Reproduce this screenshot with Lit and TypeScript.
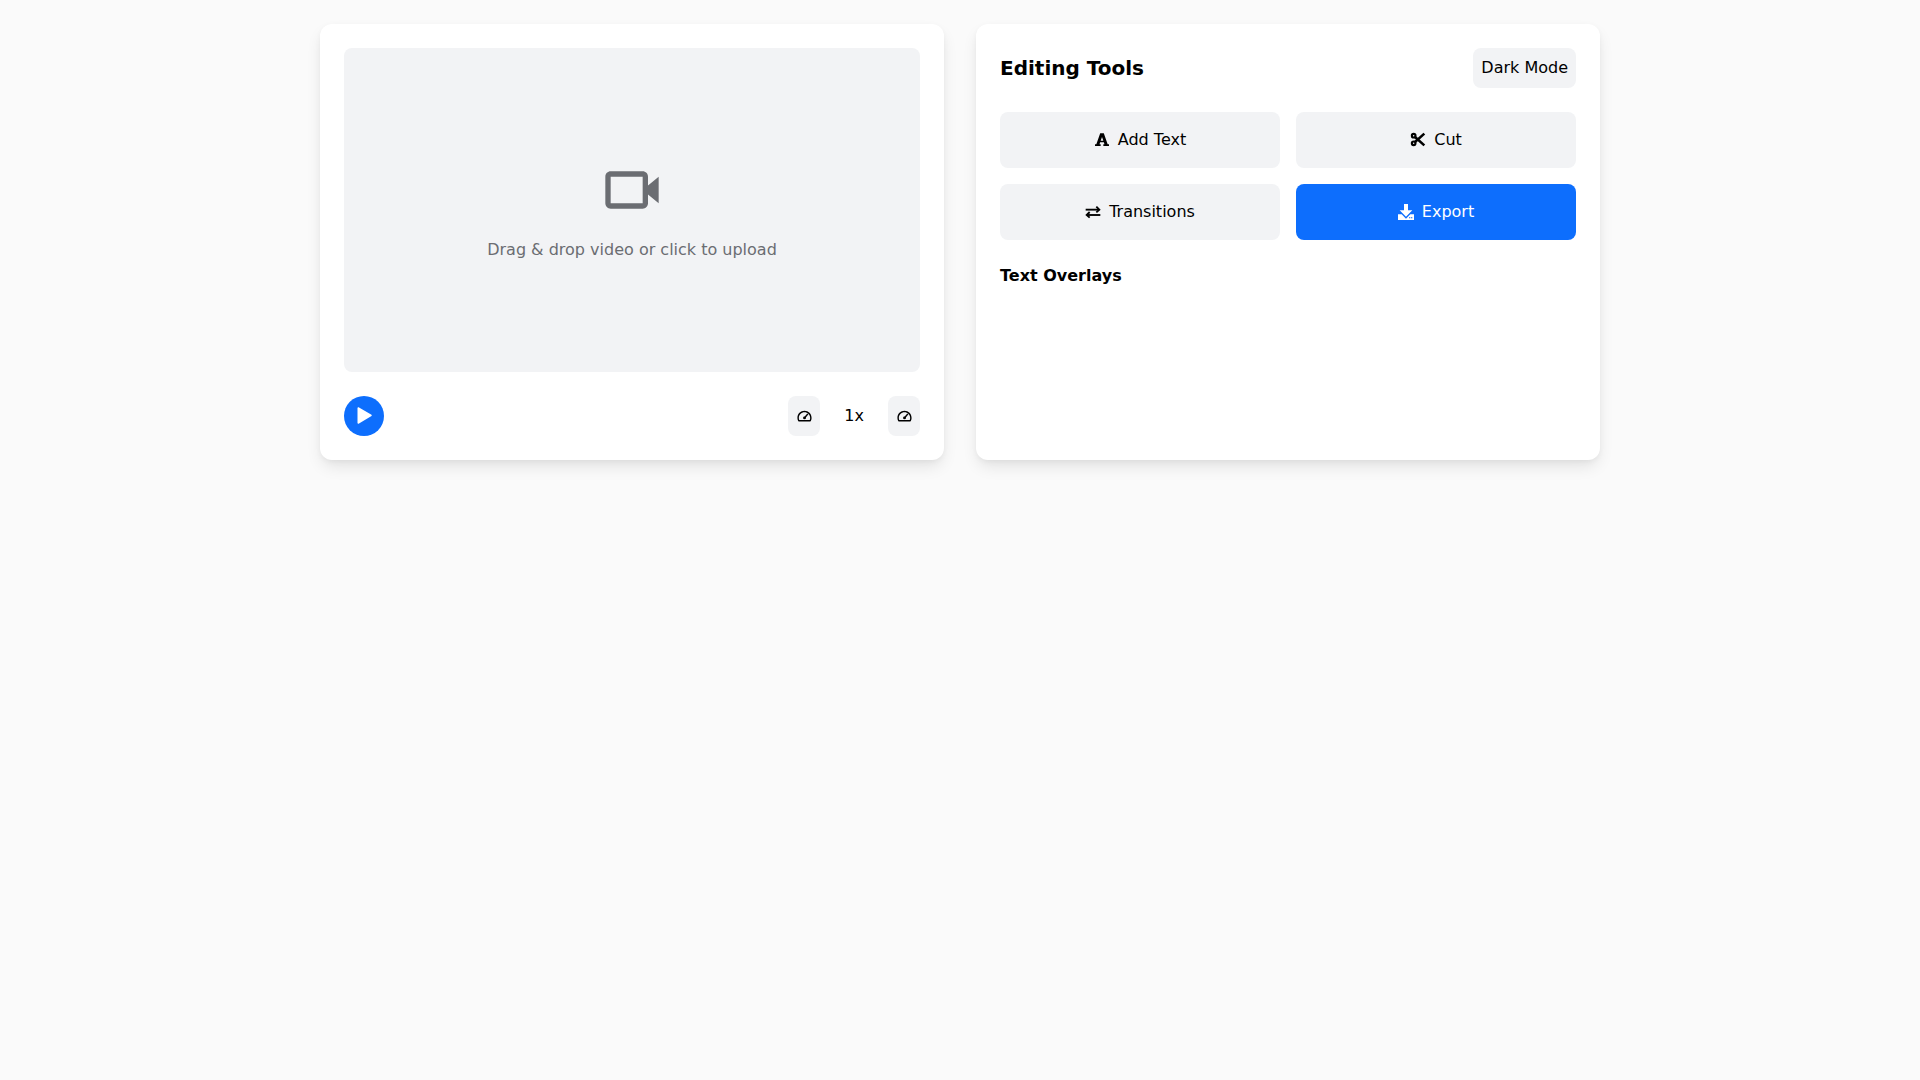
import { LitElement, html, css, svg } from "lit";
import { customElement } from "lit/decorators.js";

const gauge = svg`<path d="M12 4C6.486 4 2 8.486 2 14a9.89 9.89 0 0 0 1.051 4.445c.17.34.516.555.895.555h16.107c.379 0 .726-.215.896-.555A9.89 9.89 0 0 0 22 14c0-5.514-4.486-10-10-10zm7.41 13H4.59A7.875 7.875 0 0 1 4 14c0-4.411 3.589-8 8-8s8 3.589 8 8a7.875 7.875 0 0 1-.59 3z"/><circle cx="12" cy="14" r="2"/><path d="M12 14l4.700-5.700" stroke="currentColor" stroke-width="2.200" fill="none"/>`;
const video = svg`<path d="M18 7c0-1.103-.897-2-2-2H4c-1.103 0-2 .897-2 2v10c0 1.103.897 2 2 2h12c1.103 0 2-.897 2-2v-3.333L22 17V7l-4 3.333V7zm-1.998 10H4V7h12l.001 4.999L16 12l.001.001.001 4.999z"/>`;
const fontA = svg`<path fill-rule="evenodd" d="M9.300 2h5.400l5.800 16.500h2V21h-8.500v-2.500h1.700l-.9-3H9.200l-.9 3H10V21H1.500v-2.500h2L9.300 2zM12 7.500 10 13h4L12 7.500z"/>`;
const cut = svg`<g fill="none" stroke="currentColor"><circle cx="5.500" cy="5.500" r="2.700" stroke-width="3.200"/><circle cx="5.500" cy="17" r="2.700" stroke-width="3.200"/><path d="M7.500 7.500 21.500 20" stroke-width="3.800"/><path d="M7.500 15 21.500 2.500" stroke-width="3.800"/></g>`;
const transfer = svg`<g fill="none" stroke="currentColor" stroke-width="2.800"><path d="M1 8.500h20"/><path d="M17 4l4.500 4.500-4.500 4"/><path d="M23 16.500H3"/><path d="M7 12l-4.500 4.500 4.500 4"/></g>`;
const download = svg`<path d="M9 0h6v9.500h6.500L12 19 2.500 9.500H9z"/><path fill-rule="evenodd" d="M0 15.500h5.500L12 22l6.500-6.500H24V24H0zM16.500 20v1.500h2V20zM19.500 20v1.500h2V20z"/>`;
const play = svg`<path d="M5.500 4v15c0 .6.6 1 1.100.7L19.500 12c.4-.3.4-.9 0-1.200L6.600 3.300C6.100 3 5.500 3.400 5.500 4z"/>`;

@customElement("app-root")
export class AppRoot extends LitElement {
  static styles = css`
    :host {
      display: block;
      min-height: 1080px;
      background: #fafafa;
      color: #000;
      font-family: "DejaVu Sans", sans-serif;
      font-size: 16px;
      line-height: 24px;
    }
    .page {
      width: 1280px;
      margin: 0 auto;
      padding: 24px 0;
      display: grid;
      grid-template-columns: 1fr 1fr;
      gap: 32px;
    }
    .card {
      background: #fff;
      border-radius: 12px;
      box-shadow: 0 8px 16px -2px rgba(0, 0, 0, 0.1), 0 2px 6px -1px rgba(0, 0, 0, 0.05);
      padding: 24px;
      display: flex;
      flex-direction: column;
    }
    .drop {
      height: 324px;
      background: #f2f3f5;
      border-radius: 8px;
      display: flex;
      flex-direction: column;
      align-items: center;
      justify-content: center;
      color: #6b6d72;
    }
    .drop svg {
      width: 64px;
      height: 64px;
      fill: #6b6d72;
      margin-bottom: 16px;
    }
    .controls {
      margin-top: 24px;
      display: flex;
      align-items: center;
      justify-content: space-between;
    }
    .play {
      width: 40px;
      height: 40px;
      border-radius: 50%;
      background: #0d6efd;
      display: flex;
      align-items: center;
      justify-content: center;
    }
    .play svg {
      width: 24px;
      height: 24px;
      fill: #fff;
    }
    .speed {
      display: flex;
      align-items: center;
      gap: 24px;
    }
    .speed-btn {
      width: 32px;
      height: 40px;
      background: #f2f3f5;
      border-radius: 8px;
      display: flex;
      align-items: center;
      justify-content: center;
    }
    .speed-btn svg {
      width: 17px;
      height: 17px;
      fill: #000;
      color: #000;
    }
    .head {
      display: flex;
      align-items: center;
      justify-content: space-between;
      margin-bottom: 24px;
    }
    h2 {
      margin: 0;
      font-size: 20px;
      line-height: 30px;
      font-weight: 700;
    }
    .mode {
      height: 40px;
      padding: 0 8px;
      background: #f2f3f5;
      border-radius: 8px;
      display: flex;
      align-items: center;
    }
    .tools {
      display: grid;
      grid-template-columns: 1fr 1fr;
      gap: 16px;
    }
    .tool {
      height: 56px;
      background: #f2f3f5;
      border-radius: 8px;
      display: flex;
      align-items: center;
      justify-content: center;
      gap: 8px;
    }
    .tool svg {
      width: 16px;
      height: 16px;
      fill: currentColor;
      flex: none;
    }
    .tool.primary {
      background: #0d6efd;
      color: #fff;
    }
    h3 {
      margin: 24px 0 0;
      font-size: 16px;
      line-height: 24px;
      font-weight: 700;
    }
  `;

  render() {
    const tools = [
      { label: "Add Text", icon: fontA, cls: "" },
      { label: "Cut", icon: cut, cls: "" },
      { label: "Transitions", icon: transfer, cls: "" },
      { label: "Export", icon: download, cls: "primary" },
    ];
    return html`
      <div class="page">
        <section class="card">
          <div class="drop">
            <svg viewBox="0 0 24 24">${video}</svg>
            <span>Drag &amp; drop video or click to upload</span>
          </div>
          <div class="controls">
            <div class="play"><svg viewBox="0 0 24 24">${play}</svg></div>
            <div class="speed">
              <div class="speed-btn"><svg viewBox="0 0 24 24">${gauge}</svg></div>
              <span>1x</span>
              <div class="speed-btn"><svg viewBox="0 0 24 24">${gauge}</svg></div>
            </div>
          </div>
        </section>
        <section class="card">
          <div class="head">
            <h2>Editing Tools</h2>
            <div class="mode">Dark Mode</div>
          </div>
          <div class="tools">
            ${tools.map(
              (t) => html`<div class="tool ${t.cls}">
                <svg viewBox="0 0 24 24">${t.icon}</svg>
                <span>${t.label}</span>
              </div>`
            )}
          </div>
          <h3>Text Overlays</h3>
        </section>
      </div>
    `;
  }
}
